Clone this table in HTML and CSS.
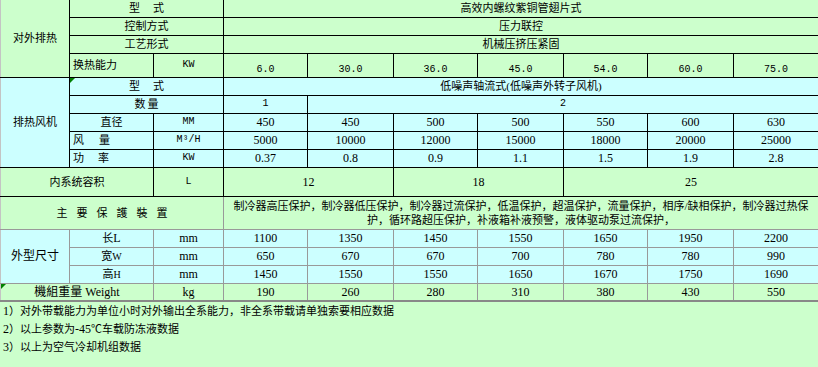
FILE: index.html
```html
<!DOCTYPE html>
<html lang="zh-CN">
<head>
<meta charset="utf-8">
<title>参数表</title>
<link rel="stylesheet" href="styles.css">
</head>
<body>
<table class="spec">
  <colgroup>
    <col class="w69"><col class="w84"><col class="w70"><col class="w84"><col class="w86"><col class="w84"><col class="w86"><col class="w84"><col class="w86"><col class="w85">
  </colgroup>
  <tbody>
    <tr class="gr r17 top">
      <td class="c1" rowspan="4">对外排热</td>
      <td colspan="2">型<span class="sp13"></span>式</td>
      <td colspan="7">高效内螺纹紫铜管翅片式</td>
    </tr>
    <tr class="gr r18">
      <td colspan="2">控制方式</td>
      <td colspan="7">压力联控</td>
    </tr>
    <tr class="gr r18">
      <td colspan="2">工艺形式</td>
      <td colspan="7">机械压挤压紧固</td>
    </tr>
    <tr class="gr r24">
      <td class="left">换热能力</td>
      <td class="mono">KW</td>
      <td class="mono bot">6.0</td>
      <td class="mono bot">30.0</td>
      <td class="mono bot">36.0</td>
      <td class="mono bot">45.0</td>
      <td class="mono bot">54.0</td>
      <td class="mono bot">60.0</td>
      <td class="mono bot">75.0</td>
    </tr>
    <tr class="cy r18">
      <td class="c1" rowspan="5">排热风机</td>
      <td colspan="2" class="mark">型<span class="sp13"></span>式</td>
      <td colspan="7">低噪声轴流式(低噪声外转子风机)</td>
    </tr>
    <tr class="cy r18">
      <td colspan="2">数<span class="sp2"></span>量</td>
      <td class="mono">1</td>
      <td colspan="6" class="mono">2</td>
    </tr>
    <tr class="cy r18">
      <td>直径</td>
      <td class="mono">MM</td>
      <td class="num">450</td>
      <td class="num">450</td>
      <td class="num">500</td>
      <td class="num">500</td>
      <td class="num">550</td>
      <td class="num">600</td>
      <td class="num">630</td>
    </tr>
    <tr class="cy r18">
      <td class="left">风<span class="sp15"></span>量</td>
      <td class="mono">M³/H</td>
      <td class="num">5000</td>
      <td class="num">10000</td>
      <td class="num">12000</td>
      <td class="num">15000</td>
      <td class="num">18000</td>
      <td class="num">20000</td>
      <td class="num">25000</td>
    </tr>
    <tr class="cy r18">
      <td class="left">功<span class="sp14"></span>率</td>
      <td class="mono">KW</td>
      <td class="num">0.37</td>
      <td class="num">0.8</td>
      <td class="num">0.9</td>
      <td class="num">1.1</td>
      <td class="num">1.5</td>
      <td class="num">1.9</td>
      <td class="num">2.8</td>
    </tr>
    <tr class="gr r29">
      <td class="c1" colspan="2">内系统容积</td>
      <td class="mono">L</td>
      <td colspan="2" class="num">12</td>
      <td colspan="2" class="num">18</td>
      <td colspan="3" class="num">25</td>
    </tr>
    <tr class="gr r33 prot">
      <td class="c1 spaced" colspan="3">主要保護裝置</td>
      <td colspan="7" class="para">制冷器高压保护，制冷器低压保护，制冷器过流保护，低温保护，超温保护，流量保护，相序/缺相保护，制冷器过热保<br>护，循环路超压保护，补液箱补液预警，液体驱动泵过流保护，</td>
    </tr>
    <tr class="cy r18 gl">
      <td class="c1 big" rowspan="3">外型尺寸</td>
      <td>长<span class="lat">L</span></td>
      <td class="num">mm</td>
      <td class="num">1100</td>
      <td class="num">1350</td>
      <td class="num">1450</td>
      <td class="num">1550</td>
      <td class="num">1650</td>
      <td class="num">1950</td>
      <td class="num">2200</td>
    </tr>
    <tr class="cy r18 gl">
      <td>宽<span class="lat sm">W</span></td>
      <td class="num">mm</td>
      <td class="num">650</td>
      <td class="num">670</td>
      <td class="num">670</td>
      <td class="num">700</td>
      <td class="num">780</td>
      <td class="num">780</td>
      <td class="num">990</td>
    </tr>
    <tr class="cy r18 gl">
      <td>高<span class="lat sm">H</span></td>
      <td class="num">mm</td>
      <td class="num">1450</td>
      <td class="num">1550</td>
      <td class="num">1550</td>
      <td class="num">1650</td>
      <td class="num">1670</td>
      <td class="num">1750</td>
      <td class="num">1690</td>
    </tr>
    <tr class="gr r18 gl last">
      <td class="c1 big mark" colspan="2">機組重量 <span class="lat">Weight</span></td>
      <td class="num">kg</td>
      <td class="num">190</td>
      <td class="num">260</td>
      <td class="num">280</td>
      <td class="num">310</td>
      <td class="num">380</td>
      <td class="num">430</td>
      <td class="num">550</td>
    </tr>
  </tbody>
</table>
<div class="notes">
  <p><span class="lat">1</span>）对外带载能力为单位小时对外输出全系能力，非全系带载请单独索要相应数据</p>
  <p><span class="lat">2</span>）以上参数为<span class="lat">-45</span>℃车载防冻液数据</p>
  <p><span class="lat">3</span>）以上为空气冷却机组数据</p>
</div>
</body>
</html>
```

FILE: styles.css
```css
html, body {
  margin: 0;
  padding: 0;
  background: #ccffcc;
}

body {
  width: 818px;
  font-family: "Liberation Serif", "Noto Sans CJK SC", serif;
  font-size: 11px;
  color: #000;
}

.spec {
  border-collapse: collapse;
  table-layout: fixed;
  width: 818px;
}

.w69 { width: 69px; }
.w70 { width: 70px; }
.w84 { width: 84px; }
.w85 { width: 85px; }
.w86 { width: 86px; }

.spec td {
  border: 1px solid #000;
  padding: 0;
  text-align: center;
  vertical-align: middle;
  white-space: nowrap;
  line-height: 14px;
  font-family: "Liberation Serif", "Noto Sans CJK SC", serif;
  font-size: 11px;
  overflow: hidden;
}

.spec tr.top td { border-top: 0; }
.spec td.c1 { border-left: 1px solid #c4c4c4; }

.gr td { background: #ccffcc; }
.cy td { background: #ccffff; }

.r17 { height: 17px; }
.r18 { height: 18px; }
.r24 { height: 24px; }
.r29 { height: 29px; }
.r33 { height: 33px; }

.spec td.left {
  text-align: left;
  padding-left: 3px;
}

.spec td.bot {
  vertical-align: bottom;
  padding-bottom: 0;
}

.spec td.mono {
  font-family: "Liberation Mono", "Noto Sans CJK SC", monospace;
  font-size: 10px;
}

.spec td.num {
  font-family: "Liberation Serif", "Noto Sans CJK SC", serif;
  font-size: 12px;
}

.sp13 { display: inline-block; width: 13px; }
.sp15 { display: inline-block; width: 15px; }
.sp14 { display: inline-block; width: 14px; }
.sp2 { display: inline-block; width: 2px; }

.lat {
  font-family: "Liberation Serif", serif;
  font-size: 12px;
}
.lat.sm { font-size: 10px; }

.spec td.big { font-size: 12px; }

.spec td.spaced {
  letter-spacing: 9px;
  padding-left: 9px;
  font-size: 11px;
}

.spec td.para {
  white-space: normal;
  line-height: 14px;
  vertical-align: middle;
}

/* lower (gray-ruled) section */
.prot td {
  border-bottom-color: #999;
  border-right-color: #999;
}
.prot td.c1 { border-right-color: #999; }
.gl td {
  border-color: #999;
}
.gl td.c1 { border-left-color: #c4c4c4; }
.last td {
  border-bottom: 2px solid #888;
}

.mark { position: relative; }
.mark::before {
  content: "";
  position: absolute;
  left: 0;
  top: 0;
  border-top: 5px solid #008000;
  border-right: 5px solid transparent;
}

.notes {
  padding-left: 3px;
}
.notes p {
  margin: 0;
  line-height: 18px;
  font-size: 11px;
  white-space: nowrap;
}
```
